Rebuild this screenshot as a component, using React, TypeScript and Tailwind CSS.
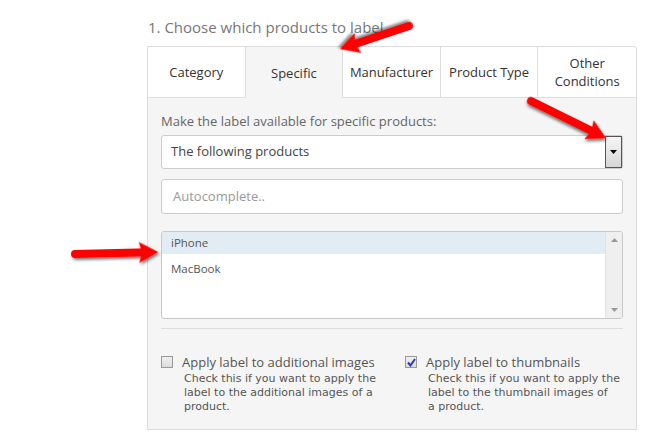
import React from "react";

type ArrowProps = { x1: number; y1: number; x2: number; y2: number };

// red annotation arrow from (x1,y1) tail to (x2,y2) tip
const Arrow = ({ x1, y1, x2, y2 }: ArrowProps) => {
  const angle = (Math.atan2(y2 - y1, x2 - x1) * 180) / Math.PI;
  const len = Math.hypot(x2 - x1, y2 - y1);
  const head = 19;
  return (
    <g transform={`translate(${x1} ${y1}) rotate(${angle})`} filter="url(#shadow)">
      <line x1={0} y1={0} x2={len - head + 3} y2={0} stroke="#f00" strokeWidth={8} strokeLinecap="round" />
      <polygon points={`${len - head},-10.5 ${len},0 ${len - head},10.5 ${len - head + 3},0`} fill="#f00" />
    </g>
  );
};

const tabs = ["Category", "Specific", "Manufacturer", "Product Type", "Other Conditions"];

export default function App() {
  return (
    <div className="relative w-[650px] h-[435px] bg-white overflow-hidden font-['Open_Sans',sans-serif]">
      <div className="ml-[147px] w-[490px] pt-[17px]">
        <h2 className="text-[15px] leading-[20px] text-[#777] pl-[1px]">1. Choose which products to label</h2>

        <div className="mt-[9px] border border-[#ddd] rounded-tr-[3px] bg-[#f5f5f5] h-[384px]">
          {/* Tabs */}
          <div className="grid grid-cols-5 h-[51px]">
            {tabs.map((t, i) => {
              const active = t === "Specific";
              return (
                <div
                  key={t}
                  className={`flex items-center justify-center text-center text-[13px] leading-[18px] text-[#333] ${
                    active ? "bg-[#f5f5f5]" : "bg-white border-b border-[#ddd]"
                  } ${i < tabs.length - 1 ? "border-r border-[#ddd]" : ""} ${i === 4 ? "rounded-tr-[3px] px-4" : ""}`}
                >
                  {t}
                </div>
              );
            })}
          </div>

          <div className="px-[13px]">
            <p className="mt-[14px] text-[13px] leading-[18px] text-[#666]">Make the label available for specific products:</p>

            {/* Select */}
            <div className="mt-[5px] relative h-[34px] bg-white border border-[#ccc] rounded-[3px] flex items-center">
              <span className="pl-[9px] text-[13px] text-[#444]">The following products</span>
              <div className="absolute right-0 top-0 bottom-0 w-[17px] border border-[#555] bg-gradient-to-b from-[#f6f6f6] to-[#d6d6d6] flex items-center justify-center">
                <svg width="7" height="4" viewBox="0 0 7 4">
                  <polygon points="0,0 7,0 3.5,4" fill="#000" />
                </svg>
              </div>
            </div>

            {/* Autocomplete */}
            <div className="mt-[10px] h-[35px] bg-white border border-[#ccc] rounded-[3px] flex items-center pl-[11px] text-[13px] text-[#999]">
              Autocomplete..
            </div>

            {/* Listbox */}
            <div className="mt-[17px] h-[88px] bg-white border border-[#c8c8c8] rounded-[3px] flex overflow-hidden">
              <div className="flex-1 text-[11.5px] text-[#555]">
                <div className="h-[22px] bg-[#e2ecf5] flex items-center pl-[9px]">iPhone</div>
                <div className="h-[26px] flex items-center pl-[9px] pt-[4px]">MacBook</div>
              </div>
              <div className="w-[17px] bg-[#efefef] border-l border-[#e2e2e2] flex flex-col justify-between items-center py-[6px]">
                <svg width="7" height="4" viewBox="0 0 7 4">
                  <polygon points="0,4 7,4 3.5,0" fill="#999" />
                </svg>
                <svg width="7" height="4" viewBox="0 0 7 4">
                  <polygon points="0,0 7,0 3.5,4" fill="#999" />
                </svg>
              </div>
            </div>

            <div className="mt-[9px] border-t border-[#ddd]" />

            {/* Options */}
            <div className="flex mt-[24px]">
              <div className="w-[244px] shrink-0 flex gap-[9px]">
                <div className="mt-[3px] w-[12px] h-[12px] border border-[#999] bg-gradient-to-b from-[#f0f0f0] to-[#dcdcdc] shrink-0" />
                <div>
                  <div className="text-[13px] leading-[18px] text-[#555]">Apply label to additional images</div>
                  <p className="w-[205px] pl-[2px] mt-[1px] font-['DejaVu_Sans',Verdana,sans-serif] text-[11px] leading-[14px] text-[#555]">
                    Check this if you want to apply the label to the additional images of a product.
                  </p>
                </div>
              </div>
              <div className="flex gap-[9px]">
                <div className="mt-[3px] w-[12px] h-[12px] border border-[#999] bg-gradient-to-b from-[#f0f0f0] to-[#dcdcdc] shrink-0 flex items-center justify-center">
                  <svg width="9" height="9" viewBox="0 0 9 9">
                    <path d="M1 4.5 L3.5 7.5 L8 1" stroke="#2a3fa8" strokeWidth="2" fill="none" />
                  </svg>
                </div>
                <div>
                  <div className="text-[13px] leading-[18px] text-[#555]">Apply label to thumbnails</div>
                  <p className="w-[196px] pl-[2px] mt-[1px] font-['DejaVu_Sans',Verdana,sans-serif] text-[11px] leading-[14px] text-[#555]">
                    Check this if you want to apply the label to the thumbnail images of
                    <br />a product.
                  </p>
                </div>
              </div>
            </div>
          </div>
        </div>
      </div>

      {/* annotation arrows */}
      <svg className="absolute inset-0 pointer-events-none" width="650" height="435">
        <defs>
          <filter id="shadow" x="-20%" y="-50%" width="140%" height="200%">
            <feDropShadow dx="1.5" dy="2" stdDeviation="1.5" floodColor="#000" floodOpacity="0.55" />
          </filter>
        </defs>
        <Arrow x1={409} y1={26} x2={340} y2={49} />
        <Arrow x1={531} y1={101} x2={606} y2={138} />
        <Arrow x1={75} y1={254} x2={158} y2={252} />
      </svg>
    </div>
  );
}
